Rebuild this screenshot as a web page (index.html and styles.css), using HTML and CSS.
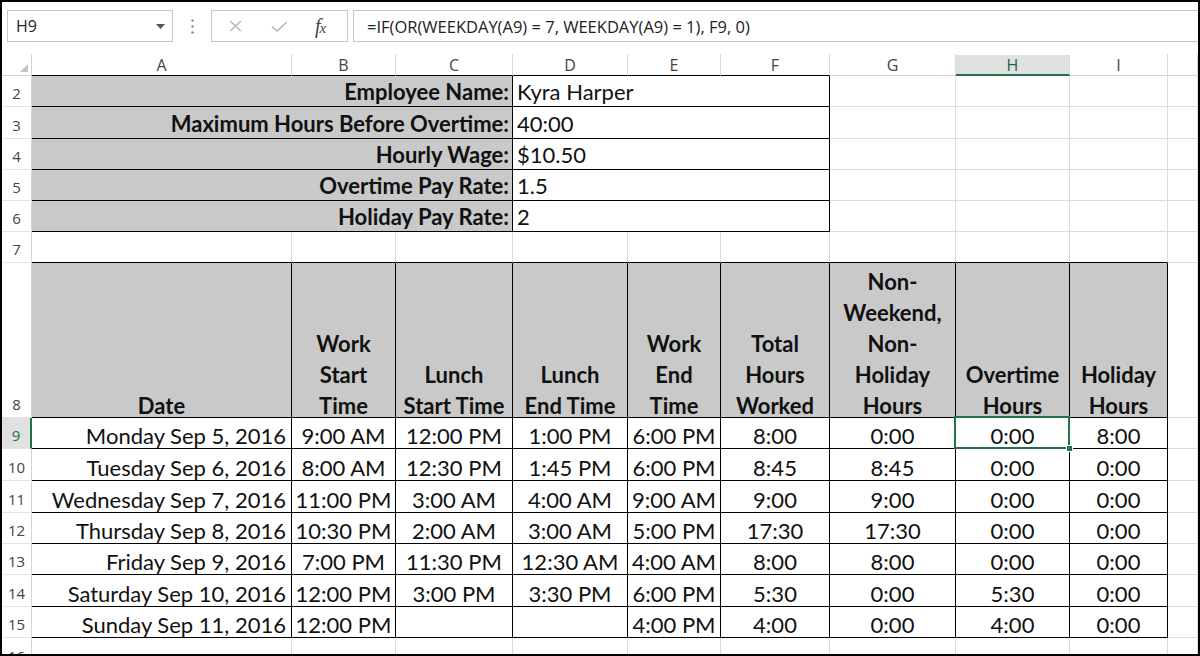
FILE: index.html
```html
<!DOCTYPE html>
<html>
<head>
<meta charset="utf-8">
<title>Timesheet</title>
<link rel="stylesheet" href="styles.css">
</head>
<body>
<div class="screen">
  <div class="fbar">
    <div class="namebox"><span>H9</span><svg class="dd" width="9" height="5" viewBox="0 0 9 5"><polygon points="0,0 9,0 4.5,5" fill="#555"/></svg></div>
    <div class="dots"><svg width="3" height="15" viewBox="0 0 3 15"><circle cx="1.5" cy="1.5" r="1.2" fill="#888"/><circle cx="1.5" cy="7.5" r="1.2" fill="#888"/><circle cx="1.5" cy="13.5" r="1.2" fill="#888"/></svg></div>
    <div class="fbtns">
      <svg class="ic-x" width="13" height="12" viewBox="0 0 13 12"><path d="M1 1 L12 11 M12 1 L1 11" stroke="#b3b3b3" stroke-width="1.3" fill="none"/></svg>
      <svg class="ic-ok" width="17" height="11" viewBox="0 0 17 11"><path d="M1 5.5 L6 10 L16 1" stroke="#b3b3b3" stroke-width="1.4" fill="none"/></svg>
      <span class="fx"><i>f</i><i class="fxx">x</i></span>
    </div>
    <div class="formula">=IF(OR(WEEKDAY(A9) = 7, WEEKDAY(A9) = 1), F9, 0)</div>
  </div>

  <div class="sheet">
    <!-- column headers -->
    <div class="corner"><svg width="8" height="8" viewBox="0 0 8 8"><polygon points="8,0 8,8 0,8" fill="#c4c4c4"/></svg></div>
    <div class="ch tb">A</div>
    <div class="ch tb">B</div>
    <div class="ch tb">C</div>
    <div class="ch tb">D</div>
    <div class="ch tb">E</div>
    <div class="ch tb">F</div>
    <div class="ch">G</div>
    <div class="ch ch-sel">H</div>
    <div class="ch">I</div>
    <div class="ch"></div>

    <!-- row 2 -->
    <div class="rh">2</div>
    <div class="c t lbl s3">Employee Name:</div>
    <div class="c t val s3">Kyra Harper</div>
    <div class="c"></div><div class="c"></div><div class="c"></div><div class="c"></div>
    <!-- row 3 -->
    <div class="rh">3</div>
    <div class="c t lbl s3">Maximum Hours Before Overtime:</div>
    <div class="c t val s3">40:00</div>
    <div class="c"></div><div class="c"></div><div class="c"></div><div class="c"></div>
    <!-- row 4 -->
    <div class="rh">4</div>
    <div class="c t lbl s3">Hourly Wage:</div>
    <div class="c t val s3">$10.50</div>
    <div class="c"></div><div class="c"></div><div class="c"></div><div class="c"></div>
    <!-- row 5 -->
    <div class="rh">5</div>
    <div class="c t lbl s3">Overtime Pay Rate:</div>
    <div class="c t val s3">1.5</div>
    <div class="c"></div><div class="c"></div><div class="c"></div><div class="c"></div>
    <!-- row 6 -->
    <div class="rh">6</div>
    <div class="c t lbl s3">Holiday Pay Rate:</div>
    <div class="c t val s3">2</div>
    <div class="c"></div><div class="c"></div><div class="c"></div><div class="c"></div>
    <!-- row 7 -->
    <div class="rh">7</div>
    <div class="c tb"></div><div class="c tb"></div><div class="c tb"></div><div class="c tb"></div><div class="c tb"></div>
    <div class="c tb"></div><div class="c tb"></div><div class="c tb"></div><div class="c tb"></div><div class="c"></div>
    <!-- row 8 -->
    <div class="rh">8</div>
    <div class="c t hd"><span>Date</span></div>
    <div class="c t hd"><span>Work<br>Start<br>Time</span></div>
    <div class="c t hd"><span>Lunch<br>Start Time</span></div>
    <div class="c t hd"><span>Lunch<br>End Time</span></div>
    <div class="c t hd"><span>Work<br>End<br>Time</span></div>
    <div class="c t hd"><span>Total<br>Hours<br>Worked</span></div>
    <div class="c t hd"><span>Non-<br>Weekend,<br>Non-<br>Holiday<br>Hours</span></div>
    <div class="c t hd"><span>Overtime<br>Hours</span></div>
    <div class="c t hd"><span>Holiday<br>Hours</span></div>
    <div class="c"></div>
    <!-- row 9 -->
    <div class="rh rh-sel">9</div>
    <div class="c t d">Monday Sep 5, 2016</div>
    <div class="c t n">9:00 AM</div>
    <div class="c t n">12:00 PM</div>
    <div class="c t n">1:00 PM</div>
    <div class="c t n">6:00 PM</div>
    <div class="c t n">8:00</div>
    <div class="c t n">0:00</div>
    <div class="c t n sel">0:00</div>
    <div class="c t n">8:00</div>
    <div class="c"></div>
    <!-- row 10 -->
    <div class="rh">10</div>
    <div class="c t d">Tuesday Sep 6, 2016</div>
    <div class="c t n">8:00 AM</div>
    <div class="c t n">12:30 PM</div>
    <div class="c t n">1:45 PM</div>
    <div class="c t n">6:00 PM</div>
    <div class="c t n">8:45</div>
    <div class="c t n">8:45</div>
    <div class="c t n">0:00</div>
    <div class="c t n">0:00</div>
    <div class="c"></div>
    <!-- row 11 -->
    <div class="rh">11</div>
    <div class="c t d">Wednesday Sep 7, 2016</div>
    <div class="c t n">11:00 PM</div>
    <div class="c t n">3:00 AM</div>
    <div class="c t n">4:00 AM</div>
    <div class="c t n">9:00 AM</div>
    <div class="c t n">9:00</div>
    <div class="c t n">9:00</div>
    <div class="c t n">0:00</div>
    <div class="c t n">0:00</div>
    <div class="c"></div>
    <!-- row 12 -->
    <div class="rh">12</div>
    <div class="c t d">Thursday Sep 8, 2016</div>
    <div class="c t n">10:30 PM</div>
    <div class="c t n">2:00 AM</div>
    <div class="c t n">3:00 AM</div>
    <div class="c t n">5:00 PM</div>
    <div class="c t n">17:30</div>
    <div class="c t n">17:30</div>
    <div class="c t n">0:00</div>
    <div class="c t n">0:00</div>
    <div class="c"></div>
    <!-- row 13 -->
    <div class="rh">13</div>
    <div class="c t d">Friday Sep 9, 2016</div>
    <div class="c t n">7:00 PM</div>
    <div class="c t n">11:30 PM</div>
    <div class="c t n">12:30 AM</div>
    <div class="c t n">4:00 AM</div>
    <div class="c t n">8:00</div>
    <div class="c t n">8:00</div>
    <div class="c t n">0:00</div>
    <div class="c t n">0:00</div>
    <div class="c"></div>
    <!-- row 14 -->
    <div class="rh">14</div>
    <div class="c t d">Saturday Sep 10, 2016</div>
    <div class="c t n">12:00 PM</div>
    <div class="c t n">3:00 PM</div>
    <div class="c t n">3:30 PM</div>
    <div class="c t n">6:00 PM</div>
    <div class="c t n">5:30</div>
    <div class="c t n">0:00</div>
    <div class="c t n">5:30</div>
    <div class="c t n">0:00</div>
    <div class="c"></div>
    <!-- row 15 -->
    <div class="rh">15</div>
    <div class="c t d">Sunday Sep 11, 2016</div>
    <div class="c t n">12:00 PM</div>
    <div class="c t n"></div>
    <div class="c t n"></div>
    <div class="c t n">4:00 PM</div>
    <div class="c t n">4:00</div>
    <div class="c t n">0:00</div>
    <div class="c t n">4:00</div>
    <div class="c t n">0:00</div>
    <div class="c"></div>
    <!-- row 16 -->
    <div class="rh rh-cut">16</div>
    <div class="c"></div><div class="c"></div><div class="c"></div><div class="c"></div><div class="c"></div>
    <div class="c"></div><div class="c"></div><div class="c"></div><div class="c"></div><div class="c"></div>
  </div>
</div>
</body>
</html>
```

FILE: styles.css
```css
body {
  margin: 0;
  background: #fff;
}

.screen {
  width: 1200px;
  height: 656px;
  box-sizing: border-box;
  border: 2px solid #000;
  overflow: hidden;
  background: #fff;
  font-family: "Lato", sans-serif;
  color: #111;
}

/* ---------- formula bar ---------- */
.fbar {
  display: flex;
  height: 32px;
  padding: 8px 0 12px 5px;
  font-family: "Open Sans", "Noto Sans", sans-serif;
  font-size: 16.5px;
  color: #222;
}

.namebox {
  width: 166px;
  box-sizing: border-box;
  border: 1px solid #c6c6c6;
  display: flex;
  align-items: center;
  justify-content: space-between;
  padding: 0 7px 0 8px;
  font-size: 16px;
}

.dots {
  width: 38px;
  display: flex;
  align-items: center;
  justify-content: center;
}

.fbtns {
  width: 137px;
  box-sizing: border-box;
  border: 1px solid #c6c6c6;
  display: flex;
  align-items: center;
  padding-left: 17px;
}

.ic-x { margin-right: 29px; }
.ic-ok { margin-right: 27px; }

.fx {
  font-family: "Liberation Serif", serif;
  font-size: 20px;
  color: #444;
  letter-spacing: -1px;
}
.fxx { font-size: 15px; }

.formula {
  flex: 1;
  margin-left: 5px;
  border: 1px solid #c6c6c6;
  border-right: none;
  display: flex;
  align-items: center;
  padding-left: 13px;
  white-space: nowrap;
}

/* ---------- sheet grid ---------- */
.sheet {
  display: grid;
  grid-template-columns: 30px 260px 104px 117px 115px 93px 109px 126px 114px 98px 1fr;
  grid-template-rows: 22px 31px 32px 31px 31px 31px 31px 155px 31px 32px 32px 31px 31px 32px 31px 31px;
  font-size: 22px;
}

.sheet > div {
  box-sizing: border-box;
  min-width: 0;
}

.corner {
  border-right: 1px solid #d4d4d4;
  border-bottom: 1px solid #d4d4d4;
  display: flex;
  align-items: flex-end;
  justify-content: flex-end;
  padding: 0 3px 3px 0;
}

.ch {
  font-family: "Open Sans", "Noto Sans", sans-serif;
  font-size: 16px;
  color: #444;
  display: flex;
  align-items: center;
  justify-content: center;
  border-right: 1px solid #dadada;
  border-bottom: 1px solid #d4d4d4;
}

.ch-sel {
  background: #e1e1e1;
  color: #22613f;
  border-bottom: 2px solid #217346;
  margin-top: 1px;
}

.rh {
  font-family: "Open Sans", "Noto Sans", sans-serif;
  font-size: 15px;
  color: #444;
  display: flex;
  align-items: flex-end;
  justify-content: center;
  padding-bottom: 3px;
  border-right: 1px solid #d4d4d4;
  border-bottom: 1px solid #e2e2e2;
}

.rh-cut {
  align-items: flex-start;
  padding-top: 8px;
}

.rh-sel {
  background: #e1e1e1;
  color: #217346;
  border-right: 2px solid #217346;
}

.c {
  border-right: 1px solid #dcdcdc;
  border-bottom: 1px solid #dcdcdc;
  display: flex;
  align-items: flex-end;
  line-height: 28px;
  white-space: nowrap;
}

.tb { border-bottom-color: #000; }

.t {
  border-right: 1px solid #000;
  border-bottom: 1px solid #000;
}

.s3 { grid-column: span 3; }

.lbl {
  background: #c9c9c9;
  font-weight: 700;
  justify-content: flex-end;
  padding-right: 3px;
}

.val {
  padding-left: 4px;
}

.hd {
  background: #c9c9c9;
  font-weight: 700;
  justify-content: center;
  text-align: center;
  line-height: 31px;
}

.hd span {
  margin-bottom: -4px;
}

.d {
  justify-content: flex-end;
  padding-right: 5px;
  line-height: 25px;
}

.n {
  justify-content: center;
  line-height: 25px;
}

.sel {
  position: relative;
}

.sel::after {
  content: "";
  position: absolute;
  left: -2px;
  top: -2px;
  right: -1px;
  bottom: -1px;
  border: 2px solid #217346;
}

.sel::before {
  content: "";
  position: absolute;
  right: -4px;
  bottom: -4px;
  width: 5px;
  height: 5px;
  background: #217346;
  border: 1px solid #fff;
  z-index: 1;
}
```
